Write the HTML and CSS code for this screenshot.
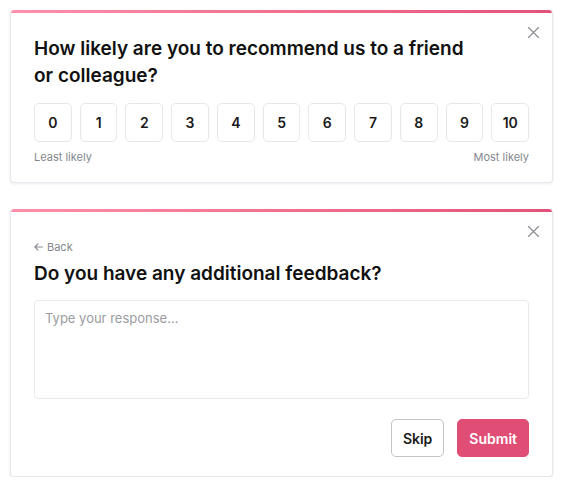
FILE: index.html
```html
<!DOCTYPE html>
<html>
<head>
<meta charset="utf-8">
<link rel="stylesheet" href="styles.css">
</head>
<body>
<div class="stack">
  <section class="card">
    <div class="accent"></div>
    <button class="close" aria-label="Close">
      <svg width="11" height="11" viewBox="0 0 11 11"><path d="M0.5 0.5L10.5 10.5M10.5 0.5L0.5 10.5" stroke="#8e9096" stroke-width="1.3" fill="none" stroke-linecap="round"/></svg>
    </button>
    <div class="body body-nps">
      <h2 class="title title-nps">How likely are you to recommend us to a friend or colleague?</h2>
      <div class="scale">
        <button class="num">0</button>
        <button class="num">1</button>
        <button class="num">2</button>
        <button class="num">3</button>
        <button class="num">4</button>
        <button class="num">5</button>
        <button class="num">6</button>
        <button class="num">7</button>
        <button class="num">8</button>
        <button class="num">9</button>
        <button class="num">10</button>
      </div>
      <div class="scale-labels">
        <span>Least likely</span>
        <span>Most likely</span>
      </div>
    </div>
  </section>

  <section class="card">
    <div class="accent"></div>
    <button class="close" aria-label="Close">
      <svg width="11" height="11" viewBox="0 0 11 11"><path d="M0.5 0.5L10.5 10.5M10.5 0.5L0.5 10.5" stroke="#8e9096" stroke-width="1.3" fill="none" stroke-linecap="round"/></svg>
    </button>
    <div class="body body-fb">
      <div class="back">
        <svg width="9" height="8" viewBox="0 0 9 8"><path d="M8.5 4H1M4 0.8L0.8 4L4 7.2" stroke="#8a8c92" stroke-width="1.1" fill="none" stroke-linecap="round" stroke-linejoin="round"/></svg>
        <span>Back</span>
      </div>
      <h2 class="title title-fb">Do you have any additional feedback?</h2>
      <div class="textarea">Type your response...</div>
      <div class="actions">
        <button class="btn btn-skip">Skip</button>
        <button class="btn btn-submit">Submit</button>
      </div>
    </div>
  </section>
</div>
</body>
</html>
```

FILE: styles.css
```css
* { box-sizing: border-box; }
html, body { margin: 0; padding: 0; background: #ffffff; }
body {
  font-family: Inter, "Noto Sans", "Liberation Sans", sans-serif;
  color: #111111;
}
.stack {
  padding: 10px 0 0 10px;
  width: 553px;
  display: flex;
  flex-direction: column;
  gap: 26px;
}
.card {
  position: relative;
  background: #fff;
  border: 1px solid #e6e6ec;
  border-top: none;
  border-radius: 4px;
  overflow: hidden;
  box-shadow: 0 1px 3px rgba(30, 30, 60, 0.08);
}
.accent {
  height: 3px;
  background: linear-gradient(90deg, #ff8fab 0%, #f2708f 50%, #e4527a 100%);
}
.close {
  position: absolute;
  top: 17px;
  right: 13px;
  width: 11px;
  height: 11px;
  padding: 0;
  border: none;
  background: none;
  display: flex;
}
.body {
  padding: 0 23px 0 23px;
}
.body-nps { padding-top: 22px; padding-bottom: 17px; }
.title {
  margin: 0;
  font-weight: 600;
  font-size: 19px;
  line-height: 27px;
  color: #111;
}
.title-nps { padding-right: 50px; }
.scale {
  margin-top: 14px;
  display: flex;
  gap: 8px;
}
.num {
  flex: 1;
  height: 39px;
  border: 1px solid #e6e6ec;
  border-radius: 5px;
  background: #fff;
  font-family: inherit;
  font-size: 14px;
  font-weight: 600;
  color: #1a1a1a;
  padding: 0;
}
.scale-labels {
  margin-top: 8px;
  display: flex;
  justify-content: space-between;
  font-size: 11px;
  line-height: 15px;
  color: #85878d;
}
.body-fb { padding-top: 27px; padding-bottom: 19px; }
.back {
  display: flex;
  align-items: center;
  gap: 4px;
  font-size: 11px;
  line-height: 16px;
  color: #85878d;
}
.title-fb { margin-top: 5px; }
.textarea {
  margin-top: 13px;
  height: 99px;
  border: 1px solid #e8e8ee;
  border-radius: 4px;
  padding: 8px 10px;
  font-size: 13px;
  line-height: 18px;
  color: #9a9ca2;
}
.actions {
  margin-top: 20px;
  display: flex;
  justify-content: flex-end;
  gap: 13px;
}
.btn {
  height: 38px;
  border-radius: 5px;
  font-family: inherit;
  font-size: 14px;
  font-weight: 600;
  padding: 0 11px;
}
.btn-skip {
  background: #fff;
  border: 1px solid #c4c4c8;
  color: #1a1a1a;
}
.btn-submit {
  background: #e04e76;
  border: 1px solid #e04e76;
  color: #fff;
}
```
